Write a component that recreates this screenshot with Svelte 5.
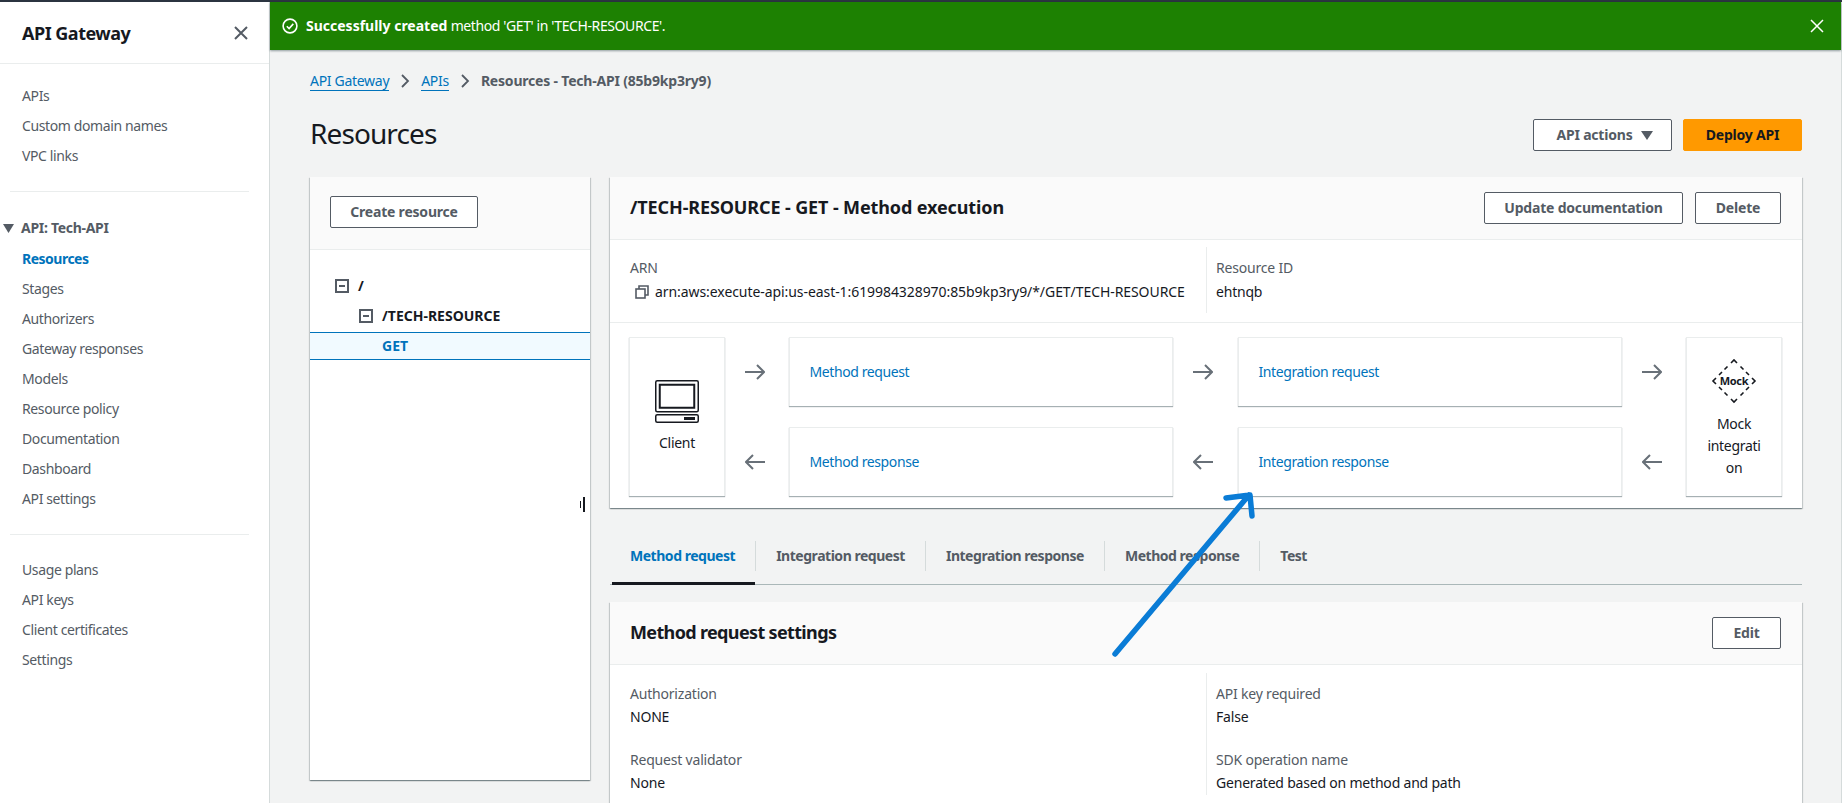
<script lang="ts">
  const navTop = ['APIs', 'Custom domain names', 'VPC links']
  const navApi = ['Resources', 'Stages', 'Authorizers', 'Gateway responses', 'Models', 'Resource policy', 'Documentation', 'Dashboard', 'API settings']
  const navBottom = ['Usage plans', 'API keys', 'Client certificates', 'Settings']
  const tabs = ['Method request', 'Integration request', 'Integration response', 'Method response', 'Test']
</script>

{#snippet arrowRight()}
  <svg class="flow__arrow" width="20" height="16" viewBox="0 0 20 16" fill="none" stroke="#687078" stroke-width="2"><path d="M0 8h19M12 1l7 7-7 7"></path></svg>
{/snippet}

{#snippet arrowLeft()}
  <svg class="flow__arrow" width="20" height="16" viewBox="0 0 20 16" fill="none" stroke="#687078" stroke-width="2"><path d="M20 8H1M8 1L1 8l7 7"></path></svg>
{/snippet}

{#snippet minusBox()}
  <svg class="tree__toggle" width="14" height="14" viewBox="0 0 14 14" fill="none" stroke="#545b64" stroke-width="2"><rect x="1" y="1" width="12" height="12"></rect><path d="M4 7h6"></path></svg>
{/snippet}

<div class="page">
  <div class="topline"></div>
  <div class="shell">
    <aside class="side">
      <div class="side__head">
        <span class="side__title">API Gateway</span>
        <svg width="16" height="16" viewBox="0 0 16 16" fill="none" stroke="#545b64" stroke-width="2"><path d="M2 2l12 12M14 2L2 14"></path></svg>
      </div>
      <nav class="side__group side__group--first">
        {#each navTop as item}<span class="side__link">{item}</span>{/each}
      </nav>
      <div class="side__rule"></div>
      <div class="side__section">
        <svg width="11" height="9" viewBox="0 0 11 9"><path d="M0 0h11L5.5 9z" fill="#545b64"></path></svg>
        <span>API: Tech-API</span>
      </div>
      <nav class="side__group">
        {#each navApi as item}
          <span class="side__link" class:side__link--active={item === 'Resources'}>{item}</span>
        {/each}
      </nav>
      <div class="side__rule"></div>
      <nav class="side__group">
        {#each navBottom as item}<span class="side__link">{item}</span>{/each}
      </nav>
    </aside>

    <main class="main">
      <div class="flash">
        <svg width="16" height="16" viewBox="0 0 16 16" fill="none" stroke="#fff" stroke-width="1.6"><circle cx="8" cy="8" r="6.9"></circle><path d="M4.8 8.2l2.3 2.3 4.2-4.6"></path></svg>
        <span class="flash__text"><b>Successfully created</b> method 'GET' in 'TECH-RESOURCE'.</span>
        <svg class="flash__close" width="14" height="14" viewBox="0 0 14 14" fill="none" stroke="#fff" stroke-width="1.5"><path d="M1 1l12 12M13 1L1 13"></path></svg>
      </div>

      <div class="content">
        <div class="crumbs">
          <a href="#top">API Gateway</a>
          <svg width="10" height="16" viewBox="0 0 10 16" fill="none" stroke="#545b64" stroke-width="1.8"><path d="M2 2l6 6-6 6"></path></svg>
          <a href="#top">APIs</a>
          <svg width="10" height="16" viewBox="0 0 10 16" fill="none" stroke="#545b64" stroke-width="1.8"><path d="M2 2l6 6-6 6"></path></svg>
          <span class="crumbs__current">Resources - Tech-API (85b9kp3ry9)</span>
        </div>

        <div class="titlebar">
          <h1>Resources</h1>
          <div class="titlebar__actions">
            <button class="btn btn--actions" type="button">API actions
              <svg width="12" height="9" viewBox="0 0 12 9"><path d="M0 0h12L6 9z" fill="#545b64"></path></svg>
            </button>
            <button class="btn btn--primary" type="button">Deploy API</button>
          </div>
        </div>

        <div class="split">
          <section class="tree-panel">
            <div class="tree-panel__head">
              <button class="btn btn--create" type="button">Create resource</button>
            </div>
            <div class="tree">
              <div class="tree__row tree__row--root">{@render minusBox()}<span>/</span></div>
              <div class="tree__row tree__row--child">{@render minusBox()}<span>/TECH-RESOURCE</span></div>
              <div class="tree__row tree__row--selected">GET</div>
            </div>
            <div class="tree-panel__handle"><i></i><i></i></div>
          </section>

          <div class="detail">
            <section class="panel">
              <header class="panel__head">
                <h2 class="title-caps">/TECH-RESOURCE - GET - Method execution</h2>
                <div class="panel__btns">
                  <button class="btn btn--doc" type="button">Update documentation</button>
                  <button class="btn btn--delete" type="button">Delete</button>
                </div>
              </header>
              <div class="kv kv--arn">
                <div class="kv__col">
                  <div class="kv__label">ARN</div>
                  <div class="kv__value kv__value--arn">
                    <svg width="14" height="14" viewBox="0 0 14 14" fill="none" stroke="#545b64" stroke-width="1.6"><rect x="1" y="4" width="9" height="9"></rect><path d="M4 4V1h9v9h-3"></path></svg>
                    <span class="arn">arn:aws:execute-api:us-east-1:619984328970:85b9kp3ry9/*/GET/TECH-RESOURCE</span>
                  </div>
                </div>
                <div class="kv__col">
                  <div class="kv__label">Resource ID</div>
                  <div class="kv__value">ehtnqb</div>
                </div>
              </div>
              <div class="flow">
                <div class="flow__end">
                  <svg width="44" height="43" viewBox="0 0 44 43" fill="none" stroke="#16191f" stroke-width="1.5">
                    <rect x="0.75" y="0.75" width="42.5" height="31" rx="1.5"></rect>
                    <rect x="4.75" y="4.75" width="34.5" height="23" stroke-width="2"></rect>
                    <rect x="0.75" y="34.75" width="42.5" height="7.5" rx="1.5"></rect>
                    <path d="M29 38.5h11" stroke-width="3"></path>
                  </svg>
                  <span class="flow__label">Client</span>
                </div>
                {@render arrowRight()}
                <div class="flow__box"><a href="#top">Method request</a></div>
                {@render arrowRight()}
                <div class="flow__box"><a href="#top">Integration request</a></div>
                {@render arrowRight()}
                <div class="flow__end flow__end--mock">
                  <svg width="46" height="46" viewBox="0 0 46 46" fill="none" stroke="#16191f" stroke-width="1.6">
                    <path d="M20 5l3-3 3 3M20 41l3 3 3-3M5 20l-3 3 3 3M41 20l3 3-3 3"></path>
                    <path d="M29.5 8.5l3 3M35 14l3 3M16.5 8.5l-3 3M11 14l-3 3M29.5 37.5l3-3M35 32l3-3M16.5 37.5l-3-3M11 32l-3-3"></path>
                    <text x="23" y="27" text-anchor="middle" class="flow__mock-text">Mock</text>
                  </svg>
                  <span class="flow__label flow__label--mock">Mock integration</span>
                </div>
                {@render arrowLeft()}
                <div class="flow__box"><a href="#top">Method response</a></div>
                {@render arrowLeft()}
                <div class="flow__box"><a href="#top">Integration response</a></div>
                {@render arrowLeft()}
              </div>
            </section>

            <div class="tabs">
              {#each tabs as tab, i}
                <span class="tabs__tab" class:tabs__tab--active={i === 0} class:tabs__tab--last={i === tabs.length - 1}>{tab}</span>
              {/each}
            </div>

            <section class="panel panel--settings">
              <header class="panel__head">
                <h2>Method request settings</h2>
                <button class="btn btn--edit" type="button">Edit</button>
              </header>
              <div class="kv">
                <div class="kv__col">
                  <div class="kv__label">Authorization</div>
                  <div class="kv__value">NONE</div>
                  <div class="kv__label kv__label--next">Request validator</div>
                  <div class="kv__value">None</div>
                </div>
                <div class="kv__col">
                  <div class="kv__label">API key required</div>
                  <div class="kv__value">False</div>
                  <div class="kv__label kv__label--next">SDK operation name</div>
                  <div class="kv__value">Generated based on method and path</div>
                </div>
              </div>
            </section>
          </div>
        </div>
      </div>
    </main>
  </div>

  <svg class="callout" width="160" height="180" viewBox="0 0 160 180" fill="none" stroke="#0a7cd6" stroke-width="5.5" stroke-linecap="round" stroke-linejoin="round">
    <path d="M7 167L141 8M118 11l24-3 2 21"></path>
  </svg>
</div>

<style>
  :global(body) {
    margin: 0;
    font-family: "Noto Sans", sans-serif;
    color: #16191f;
  }

  .page {
    position: relative;
    height: 803px;
    overflow: hidden;
    background: #f2f3f3;
    font-size: 14px;
    line-height: 22px;
    letter-spacing: -0.3px;
  }

  .topline {
    height: 2px;
    background: #2b3440;
  }

  .shell {
    display: flex;
    height: 801px;
  }

  a {
    color: #0073bb;
    text-decoration: none;
  }

  /* ── Sidebar ── */
  .side {
    width: 269px;
    flex-shrink: 0;
    background: #fff;
    border-right: 1px solid #d5dbdb;
  }

  .side__head {
    height: 61px;
    padding: 0 20px 0 22px;
    display: flex;
    align-items: center;
    justify-content: space-between;
    border-bottom: 1px solid #eaeded;
  }

  .side__title {
    font-size: 18px;
    font-weight: 700;
    letter-spacing: -0.5px;
  }

  .side__group {
    display: flex;
    flex-direction: column;
  }

  .side__group--first {
    margin-top: 17px;
  }

  .side__link {
    height: 30px;
    line-height: 30px;
    padding-left: 22px;
    color: #545b64;
    letter-spacing: -0.38px;
  }

  .side__link--active {
    color: #0073bb;
    font-weight: 700;
    letter-spacing: -0.5px;
  }

  .side__rule {
    height: 1px;
    margin: 20px 20px 20px 10px;
    background: #eaeded;
  }

  .side__section {
    height: 32px;
    display: flex;
    align-items: center;
    gap: 7px;
    padding-left: 3px;
    color: #545b64;
    font-weight: 700;
  }

  /* ── Main ── */
  .main {
    flex: 1;
    min-width: 0;
    border-right: 1px solid #d5dbdb;
  }

  .flash {
    height: 48px;
    padding: 0 17px 0 12px;
    display: flex;
    align-items: center;
    gap: 8px;
    background: #1d8102;
    color: #fff;
    box-shadow: 0 1px 2px rgba(0, 28, 36, 0.4);
    letter-spacing: -0.4px;
  }

  .flash__text b {
    letter-spacing: 0;
  }

  .flash__close {
    margin-left: auto;
  }

  .content {
    padding: 0 39px 0 40px;
  }

  .crumbs {
    height: 22px;
    margin-top: 20px;
    display: flex;
    align-items: center;
    gap: 11px;
  }

  .crumbs a {
    border-bottom: 1px solid #0073bb;
    line-height: 19px;
  }

  .crumbs__current {
    color: #545b64;
    font-weight: 700;
    letter-spacing: -0.2px;
  }

  .titlebar {
    margin-top: 27px;
    height: 32px;
    display: flex;
    align-items: center;
    justify-content: space-between;
  }

  h1 {
    margin: -4px 0 0;
    font-size: 28px;
    font-weight: 400;
    line-height: 36px;
    letter-spacing: -0.9px;
  }

  .titlebar__actions {
    display: flex;
    gap: 11px;
  }

  .btn {
    height: 32px;
    padding: 0;
    border: 1px solid #545b64;
    border-radius: 2px;
    background: #fff;
    color: #545b64;
    font: 700 14px/20px "Noto Sans", sans-serif;
    letter-spacing: -0.2px;
    display: inline-flex;
    align-items: center;
    justify-content: center;
    gap: 12px;
  }

  .btn--actions {
    width: 139px;
    padding-left: 4px;
    gap: 8px;
  }

  .btn--create { width: 148px; }
  .btn--doc { width: 199px; }
  .btn--delete { width: 86px; }
  .btn--edit { width: 69px; }

  .btn--primary {
    width: 119px;
    border-color: #ff9900;
    background: #ff9900;
    color: #16191f;
  }

  .split {
    margin-top: 26px;
    display: flex;
    gap: 20px;
    align-items: flex-start;
  }

  /* ── Tree ── */
  .tree-panel {
    position: relative;
    width: 280px;
    height: 603px;
    flex-shrink: 0;
    background: #fff;
    box-shadow: 0 1px 1px rgba(0, 28, 36, 0.3), 1px 1px 1px rgba(0, 28, 36, 0.15), -1px 1px 1px rgba(0, 28, 36, 0.15);
  }

  .tree-panel__head {
    height: 72px;
    padding-left: 20px;
    display: flex;
    align-items: flex-start;
    background: #fafafa;
    border-bottom: 1px solid #eaeded;
  }

  .tree-panel__head .btn {
    margin-top: 19px;
  }

  .tree {
    padding-top: 21px;
  }

  .tree__row {
    height: 30px;
    display: flex;
    align-items: center;
    gap: 9px;
    font-weight: 700;
    font-size: 14px;
    letter-spacing: 0;
  }

  .tree__row--root {
    padding-left: 25px;
  }

  .tree__row--child {
    padding-left: 49px;
  }

  .tree__row--selected {
    height: 26px;
    margin-top: 1px;
    padding-left: 72px;
    background: #f1faff;
    border-top: 1px solid #0073bb;
    border-bottom: 1px solid #0073bb;
    color: #0073bb;
  }

  .tree-panel__handle {
    position: absolute;
    top: 320px;
    left: 270px;
    display: flex;
    align-items: center;
    gap: 2px;
  }

  .tree-panel__handle i {
    display: block;
    width: 1px;
    height: 7px;
    background: #16191f;
  }

  .tree-panel__handle i:last-child {
    width: 2px;
    height: 15px;
  }

  /* ── Detail ── */
  .detail {
    flex: 1;
    min-width: 0;
  }

  .panel {
    background: #fff;
    box-shadow: 0 1px 1px rgba(0, 28, 36, 0.3), 1px 1px 1px rgba(0, 28, 36, 0.15), -1px 1px 1px rgba(0, 28, 36, 0.15);
  }

  .panel__head {
    height: 62px;
    padding: 0 21px 0 20px;
    display: flex;
    align-items: center;
    justify-content: space-between;
    background: #fafafa;
    border-bottom: 1px solid #eaeded;
  }

  h2 {
    margin: -2px 0 0;
    font-size: 18px;
    font-weight: 700;
    line-height: 22px;
    letter-spacing: -0.65px;
  }

  .title-caps {
    letter-spacing: -0.12px;
  }

  .panel__btns {
    display: flex;
    gap: 12px;
  }

  .kv {
    display: grid;
    grid-template-columns: 576px 1fr;
    padding: 7px 20px 0 20px;
  }

  .kv--arn {
    height: 75px;
    border-bottom: 1px solid #eaeded;
    box-sizing: content-box;
  }

  .kv__col {
    padding-top: 9px;
  }

  .kv__col + .kv__col {
    padding-left: 9px;
    border-left: 1px solid #eaeded;
    height: max-content;
    min-height: 57px;
  }

  .kv__label {
    color: #545b64;
    line-height: 24px;
    letter-spacing: -0.2px;
  }

  .kv__label--next {
    margin-top: 19px;
  }

  .kv__value {
    line-height: 24px;
    letter-spacing: -0.2px;
  }

  .kv__value--arn {
    display: flex;
    align-items: center;
    gap: 6px;
    padding-left: 5px;
  }

  .arn {
    letter-spacing: -0.07px;
  }

  .flow {
    display: grid;
    grid-template-columns: 96px 64px 384px 65px 384px 64px 96px;
    grid-template-rows: 69px 69px;
    row-gap: 21px;
    padding: 14px 19px 12px 19px;
  }

  .flow__arrow {
    justify-self: start;
    align-self: center;
    margin-left: 20px;
  }

  .flow__box,
  .flow__end {
    background: #fff;
    border: 1px solid #eaeded;
    border-bottom: 0;
    box-sizing: border-box;
    box-shadow: 0 1px 1px rgba(0, 28, 36, 0.35);
  }

  .flow__box {
    display: flex;
    align-items: center;
    padding: 0 19.5px;
    letter-spacing: -0.4px;
  }

  .flow__end {
    grid-row: 1 / span 2;
    display: flex;
    flex-direction: column;
    align-items: center;
    padding-top: 42px;
    text-align: center;
  }

  .flow__end--mock {
    grid-column: 7;
    padding-top: 20px;
  }

  .flow__label {
    margin-top: 9px;
    display: block;
    width: 64px;
    overflow-wrap: anywhere;
  }

  .flow__label--mock {
    width: 60px;
  }

  .flow__mock-text {
    font: 700 11px "Noto Sans", sans-serif;
    fill: #16191f;
    stroke: none;
  }

  /* ── Tabs ── */
  .tabs {
    margin-top: 33px;
    height: 43px;
    display: flex;
    border-bottom: 1px solid #aab7b8;
  }

  .tabs__tab {
    position: relative;
    height: 30px;
    line-height: 30px;
    padding: 0 20px;
    border-right: 1px solid #d5dbdb;
    color: #545b64;
    font-weight: 700;
    letter-spacing: -0.47px;
  }

  .tabs__tab--last {
    border-right: 0;
  }

  .tabs__tab--active {
    color: #0073bb;
  }

  .tabs__tab--active::after {
    content: '';
    position: absolute;
    left: 2px;
    right: 0;
    top: 41px;
    height: 3px;
    background: #16191f;
  }

  .panel--settings {
    margin-top: 17px;
  }

  .panel--settings .kv {
    padding-top: 8px;
    padding-bottom: 30px;
  }

  .panel--settings .kv__label {
    line-height: 23px;
  }

  /* ── Annotation drawn on top of the screenshot ── */
  .callout {
    position: absolute;
    left: 1108px;
    top: 487px;
  }
</style>
